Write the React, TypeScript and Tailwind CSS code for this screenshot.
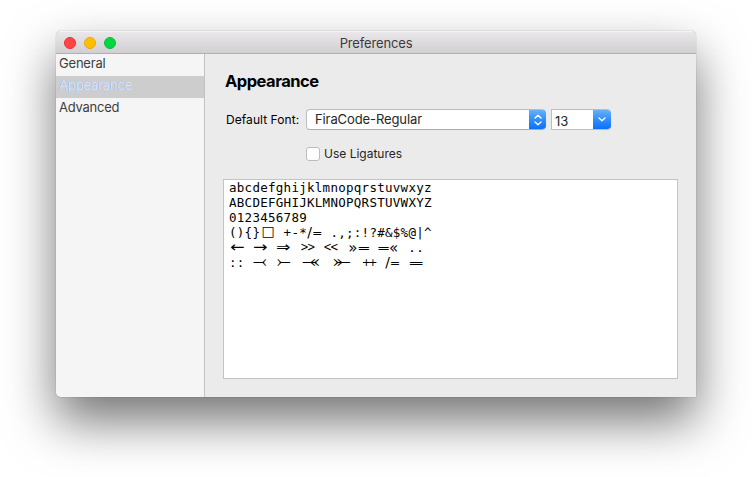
import React from "react";

const ui = "font-['Inter','Liberation_Sans',sans-serif]";

function Chevron({ up, className = "" }: { up?: boolean; className?: string }) {
  return (
    <svg width="8" height="5" viewBox="0 0 8 5" className={className}>
      <path
        d={up ? "M1 4 L4 1.2 L7 4" : "M1 1 L4 3.8 L7 1"}
        fill="none"
        stroke="white"
        strokeWidth="1.4"
        strokeLinecap="round"
        strokeLinejoin="round"
      />
    </svg>
  );
}

/* A ligature centred in a box two or three character cells wide */
function Lig({ children, wide, c = "" }: { children: React.ReactNode; wide?: boolean; c?: string }) {
  return (
    <span className={(wide ? "w-[23.4px] " : "w-[15.6px] ") + "flex h-[15px] shrink-0 items-center justify-center font-['DejaVu_Sans'] tracking-normal"}>
      <span className={"block leading-[15px] " + c}>{children}</span>
    </span>
  );
}

function NotEqual() {
  return (
    <Lig>
      <span className="flex">
        <span className="text-[14px]">/</span>
        <span>=</span>
      </span>
    </Lig>
  );
}

export default function App() {
  return (
    <div className={"h-[477px] w-[752px] overflow-hidden bg-white pl-[56px] pt-[31px] text-[13px] " + ui}>
      <div className="flex h-[366px] w-[640px] flex-col overflow-hidden rounded-t-[5px] rounded-bl-[5px] bg-[#ebebeb] shadow-[0_0_1px_rgba(0,0,0,0.5),0_24px_50px_0px_rgba(0,0,0,0.55)]">
        <header className="grid h-[23px] shrink-0 grid-cols-[1fr_auto_1fr] items-center border-b border-[#b1afb1] border-t border-t-[#f5f4f5] bg-linear-to-b from-[#e9e7e9] to-[#d1cfd1]">
          <div className="flex gap-2 pl-2">
            <i className="size-3 rounded-full border border-[#f02c2f] bg-[#ff4646]" />
            <i className="size-3 rounded-full border border-[#eba316] bg-[#ffbf00]" />
            <i className="size-3 rounded-full border border-[#0cbd38] bg-[#00d842]" />
          </div>
          <h1 className="text-[13px] leading-4 tracking-[-0.15px] text-[#3c3a3c]">Preferences</h1>
        </header>
        <div className="flex min-h-0 flex-1">
          <nav className="w-[149px] shrink-0 border-r border-[#c4c4c4] bg-[#f5f5f5] text-[13px] leading-[18px] tracking-[-0.2px] text-[#3e3e3e]">
            <div className="h-[22px] pl-[3px]">General</div>
            <div className="h-[22px] bg-[#cdcdcd] pl-[3px] text-[#dedff5] [text-shadow:-0.7px_0_0_#86bdf2]">Appearance</div>
            <div className="h-[22px] pl-[3px] tracking-[-0.25px]">Advanced</div>
          </nav>
          <main className="flex-1 pl-[18px]">
            <h2 className="mt-[16px] mb-[17px] pl-[2px] text-[16.5px] leading-[22px] font-bold tracking-[-0.5px] text-black">Appearance</h2>
            <div className="flex h-[21px] items-center">
              <label className="w-[83px] pl-[3px] text-[12px] tracking-[0.06px] whitespace-nowrap text-black">Default Font:</label>
              <div className="flex h-[21px] w-[240px] overflow-hidden rounded-[4px] border border-r-0 border-[#bdbdbd] border-b-[#acacac] bg-white">
                <span className="flex-1 pl-[8px] leading-[19px] tracking-[-0.1px] text-[#262626]">FiraCode-Regular</span>
                <span className="-my-px flex w-[17px] flex-col items-center justify-center gap-[2px] bg-linear-to-b from-[#6bb3fa] via-[#2f8ffb] to-[#0a6aff]">
                  <Chevron up />
                  <Chevron />
                </span>
              </div>
              <div className="ml-[5px] flex h-[21px] w-[60px] overflow-hidden rounded-r-[4px] border border-r-0 border-[#bdbdbd] bg-white">
                <span className="flex-1 pl-[3px] leading-[23px] text-[#262626]">13</span>
                <span className="-my-px flex w-[18px] items-center justify-center bg-linear-to-b from-[#6bb3fa] via-[#2f8ffb] to-[#0a6aff]">
                  <Chevron />
                </span>
              </div>
            </div>
            <div className="mt-[17px] ml-[83px] flex h-[14px] items-center">
              <span className="size-[14px] rounded-[3px] border border-[#bcbcbc] bg-white" />
              <span className="pl-[4px] text-[12px] text-[#262626]">Use Ligatures</span>
            </div>
            <div className="mt-[18px] h-[200px] w-[455px] border border-[#c3c3c3] bg-white pl-[5px] font-['DejaVu_Sans_Mono',monospace] text-[12.5px] leading-[15px] tracking-[0.275px] whitespace-pre text-black">
              <div>abcdefghijklmnopqrstuvwxyz</div>
              <div>ABCDEFGHIJKLMNOPQRSTUVWXYZ</div>
              <div>0123456789</div>
              <div className="flex">
                <span>{"(){}"}</span>
                <Lig c="text-[14px] -translate-y-px">□</Lig>
                <span>{" +-*"}</span>
                <NotEqual />
                <span>{" .,;:!?#&$%@|^"}</span>
              </div>
              <div className="flex gap-[7.8px]">
                <Lig c="text-[15px] scale-x-[1.15]">←</Lig>
                <Lig c="text-[15px] scale-x-[1.15]">→</Lig>
                <Lig c="text-[15px] scale-x-[1.15]">⇒</Lig>
                <Lig c="text-[12px] tracking-[-2px]! scale-x-[0.85]">&gt;&gt;</Lig>
                <Lig c="text-[12px] tracking-[-2px]! scale-x-[0.85]">&lt;&lt;</Lig>
                <Lig wide>
                  <span className="flex items-center justify-center">
                    <span className="translate-y-px text-[15px] leading-[15px]">»</span>
                    <span className="-ml-px origin-left scale-x-[1.3]">=</span>
                  </span>
                </Lig>
                <Lig wide>
                  <span className="flex items-center justify-center">
                    <span className="-mr-px origin-right scale-x-[1.3]">=</span>
                    <span className="translate-y-px text-[15px] leading-[15px]">«</span>
                  </span>
                </Lig>
                <span>..</span>
              </div>
              <div className="flex gap-[7.8px]">
                <span>::</span>
                <Lig c="text-[17px] -translate-y-px">⤙</Lig>
                <Lig c="text-[17px] -translate-y-px">⤚</Lig>
                <Lig wide c="scale-x-[1.3] text-[17px] -translate-y-px">⤛</Lig>
                <Lig wide c="scale-x-[1.3] text-[17px] -translate-y-px">⤜</Lig>
                <Lig c="text-[11px] tracking-[-2.5px]! -translate-x-px">++</Lig>
                <NotEqual />
                <Lig c="scale-x-[1.6]">=</Lig>
              </div>
            </div>
          </main>
        </div>
      </div>
    </div>
  );
}
